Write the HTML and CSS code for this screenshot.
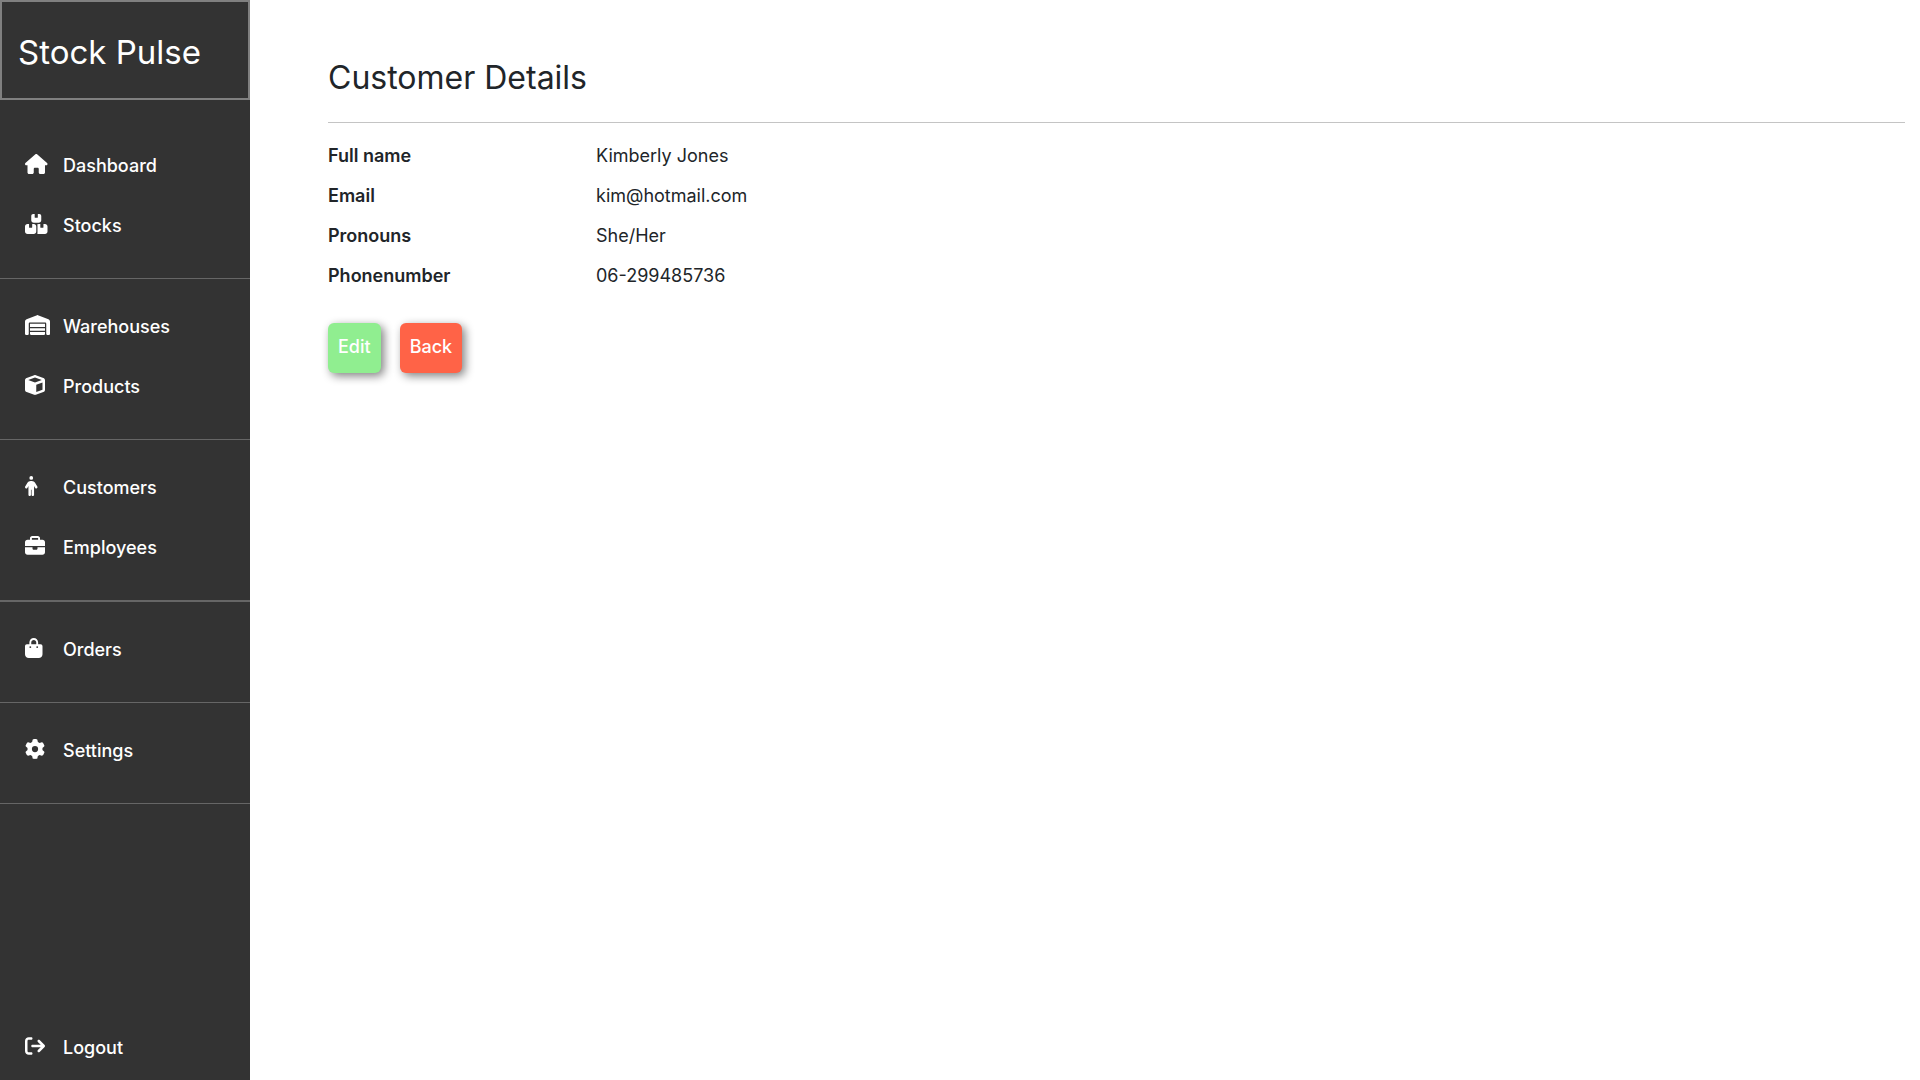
FILE: index.html
```html
<!DOCTYPE html>
<html lang="en">
<head>
<meta charset="utf-8">
<meta name="viewport" content="width=device-width, initial-scale=1">
<title>Stock Pulse - Customer Details</title>
<link rel="stylesheet" href="styles.css">
</head>
<body>
<div class="layout">
  <aside class="sidebar">
    <a class="brand" href="#">Stock Pulse</a>
    <nav class="menu">
      <ul class="menu-group">
        <li><a class="menu-link" href="#"><svg class="icon" viewBox="0 0 576 512" aria-hidden="true"><path d="M575.8 255.5c0 18-15 32.1-32 32.1h-32l.7 160.2c0 2.7-.2 5.4-.5 8.1V472c0 22.1-17.9 40-40 40H456c-1.1 0-2.2 0-3.3-.1c-1.4 .1-2.8 .1-4.2 .1H416 392c-22.1 0-40-17.9-40-40V448 384c0-17.7-14.3-32-32-32H256c-17.7 0-32 14.3-32 32v64 24c0 22.1-17.9 40-40 40H160 128.1c-1.5 0-3-.1-4.5-.2c-1.2 .1-2.4 .2-3.6 .2H104c-22.1 0-40-17.9-40-40V360c0-.9 0-1.9 .1-2.8V287.6H32c-18 0-32-14-32-32.1c0-9 3-17 10-24L266.4 8c7-7 15-8 22-8s15 2 21 7L564.8 231.5c8 7 12 15 11 24z"/></svg><span>Dashboard</span></a></li>
        <li><a class="menu-link" href="#"><svg class="icon" viewBox="0 0 576 512" aria-hidden="true"><path d="M248 0H208c-26.5 0-48 21.5-48 48V160c0 35.3 28.7 64 64 64H352c35.3 0 64-28.7 64-64V48c0-26.5-21.5-48-48-48H328V80c0 8.8-7.2 16-16 16H264c-8.8 0-16-7.2-16-16V0zM64 256c-35.3 0-64 28.7-64 64V448c0 35.3 28.7 64 64 64H224c35.3 0 64-28.7 64-64V320c0-35.3-28.7-64-64-64H184v80c0 8.8-7.2 16-16 16H120c-8.8 0-16-7.2-16-16V256H64zM352 512H512c35.3 0 64-28.7 64-64V320c0-35.3-28.7-64-64-64H472v80c0 8.8-7.2 16-16 16H408c-8.8 0-16-7.2-16-16V256H352c-15 0-28.8 5.1-39.7 13.8c4.9 10.4 7.7 22 7.7 34.2V464c0 12.2-2.8 23.8-7.7 34.2C323.2 506.9 337 512 352 512z"/></svg><span>Stocks</span></a></li>
      </ul>
      <ul class="menu-group">
        <li><a class="menu-link" href="#"><svg class="icon" viewBox="0 0 640 512" aria-hidden="true"><path d="M0 488V171.3c0-26.2 15.9-49.7 40.2-59.4L308.1 4.8c7.6-3.1 16.1-3.1 23.8 0L599.8 111.9c24.3 9.7 40.2 33.3 40.2 59.4V488c0 13.3-10.7 24-24 24H568c-13.3 0-24-10.7-24-24V224c0-17.7-14.3-32-32-32H128c-17.7 0-32 14.3-32 32V488c0 13.3-10.7 24-24 24H24c-13.3 0-24-10.7-24-24zm488 24l-336 0c-13.3 0-24-10.7-24-24V432H512l0 56c0 13.3-10.7 24-24 24zM128 400V336H512v64H128zm0-96V224H512l0 80H128z"/></svg><span>Warehouses</span></a></li>
        <li><a class="menu-link" href="#"><svg class="icon" viewBox="0 0 512 512" aria-hidden="true"><path d="M234.5 5.7c13.9-5 29.1-5 43.1 0l192 68.6C495 83.4 512 107.5 512 134.6V377.4c0 27-17 51.2-42.5 60.3l-192 68.6c-13.9 5-29.1 5-43.1 0l-192-68.6C17 428.6 0 404.5 0 377.4V134.6c0-27 17-51.2 42.5-60.3l192-68.6zM256 66L82.3 128 256 190l173.7-62L256 66zm32 368.6l160-57.1v-188L288 246.6v188z"/></svg><span>Products</span></a></li>
      </ul>
      <ul class="menu-group menu-group-strong">
        <li><a class="menu-link" href="#"><svg class="icon" viewBox="0 0 320 512" aria-hidden="true"><path d="M112 48a48 48 0 1 1 96 0 48 48 0 1 1-96 0zm40 304V480c0 17.7-14.3 32-32 32s-32-14.3-32-32V256.9L59.4 304.5c-9.1 15.1-28.8 20-43.9 10.9s-20-28.8-10.9-43.9l58.3-97c17.4-28.9 48.6-46.6 82.3-46.6h29.7c33.7 0 64.9 17.7 82.3 46.6l58.3 97c9.1 15.1 4.2 34.8-10.9 43.9s-34.8 4.2-43.9-10.9L232 256.9V480c0 17.7-14.3 32-32 32s-32-14.3-32-32V352H152z"/></svg><span>Customers</span></a></li>
        <li><a class="menu-link" href="#"><svg class="icon" viewBox="0 0 512 512" aria-hidden="true"><path d="M184 48H328c4.4 0 8 3.6 8 8V96H176V56c0-4.4 3.6-8 8-8zm-56 8V96H64C28.7 96 0 124.7 0 160v96H192 320 512V160c0-35.3-28.7-64-64-64H384V56c0-30.9-25.1-56-56-56H184c-30.9 0-56 25.1-56 56zM512 288H320v32c0 17.7-14.3 32-32 32H224c-17.7 0-32-14.3-32-32V288H0V416c0 35.3 28.7 64 64 64H448c35.3 0 64-28.7 64-64V288z"/></svg><span>Employees</span></a></li>
      </ul>
      <ul class="menu-group">
        <li><a class="menu-link" href="#"><svg class="icon" viewBox="0 0 448 512" aria-hidden="true"><path d="M160 112c0-35.3 28.7-64 64-64s64 28.7 64 64v48H160V112zm-48 48H48c-26.5 0-48 21.5-48 48V416c0 53 43 96 96 96H352c53 0 96-43 96-96V208c0-26.5-21.5-48-48-48H336V112C336 50.1 285.9 0 224 0S112 50.1 112 112v48zm24 48a24 24 0 1 1 0 48 24 24 0 1 1 0-48zm152 24a24 24 0 1 1 48 0 24 24 0 1 1-48 0z"/></svg><span>Orders</span></a></li>
      </ul>
      <ul class="menu-group">
        <li><a class="menu-link" href="#"><svg class="icon" viewBox="0 0 512 512" aria-hidden="true"><path d="M495.9 166.6c3.2 8.7 .5 18.4-6.4 24.6l-43.3 39.4c1.1 8.3 1.7 16.8 1.7 25.4s-.6 17.1-1.7 25.4l43.3 39.4c6.9 6.2 9.6 15.9 6.4 24.6c-4.4 11.9-9.7 23.3-15.8 34.3l-4.7 8.1c-6.6 11-14 21.4-22.1 31.2c-5.9 7.2-15.7 9.6-24.5 6.8l-55.7-17.7c-13.4 10.3-28.2 18.9-44 25.4l-12.5 57.1c-2 9.1-9 16.3-18.2 17.8c-13.8 2.3-28 3.5-42.5 3.5s-28.7-1.2-42.5-3.5c-9.2-1.5-16.2-8.7-18.2-17.8l-12.5-57.1c-15.8-6.5-30.6-15.1-44-25.4L83.1 425.9c-8.8 2.8-18.6 .3-24.5-6.8c-8.1-9.8-15.5-20.2-22.1-31.2l-4.7-8.1c-6.1-11-11.4-22.4-15.8-34.3c-3.2-8.7-.5-18.4 6.4-24.6l43.3-39.4C64.6 273.1 64 264.6 64 256s.6-17.1 1.7-25.4L22.4 191.2c-6.9-6.2-9.6-15.9-6.4-24.6c4.4-11.9 9.7-23.3 15.8-34.3l4.7-8.1c6.6-11 14-21.4 22.1-31.2c5.9-7.2 15.7-9.6 24.5-6.8l55.7 17.7c13.4-10.3 28.2-18.9 44-25.4l12.5-57.1c2-9.1 9-16.3 18.2-17.8C227.3 1.2 241.5 0 256 0s28.7 1.2 42.5 3.5c9.2 1.5 16.2 8.7 18.2 17.8l12.5 57.1c15.8 6.5 30.6 15.1 44 25.4l55.7-17.7c8.8-2.8 18.6-.3 24.5 6.8c8.1 9.8 15.5 20.2 22.1 31.2l4.7 8.1c6.1 11 11.4 22.4 15.8 34.3zM256 336a80 80 0 1 0 0-160 80 80 0 1 0 0 160z"/></svg><span>Settings</span></a></li>
      </ul>
    </nav>
    <a class="menu-link logout" href="#"><svg class="icon" viewBox="0 0 512 512" aria-hidden="true"><path d="M502.6 278.6c12.5-12.5 12.5-32.8 0-45.3l-128-128c-12.5-12.5-32.8-12.5-45.3 0s-12.5 32.8 0 45.3L402.7 224 192 224c-17.7 0-32 14.3-32 32s14.3 32 32 32l210.7 0-73.4 73.4c-12.5 12.5-12.5 32.8 0 45.3s32.8 12.5 45.3 0l128-128zM160 96c17.7 0 32-14.3 32-32s-14.3-32-32-32L96 32C43 32 0 75 0 128L0 384c0 53 43 96 96 96l64 0c17.7 0 32-14.3 32-32s-14.3-32-32-32l-64 0c-17.7 0-32-14.3-32-32l0-256c0-17.7 14.3-32 32-32l64 0z"/></svg><span>Logout</span></a>
  </aside>
  <main class="content">
    <h1 class="title">Customer Details</h1>
    <dl class="details">
      <dt>Full name</dt><dd>Kimberly Jones</dd>
      <dt>Email</dt><dd>kim@hotmail.com</dd>
      <dt>Pronouns</dt><dd>She/Her</dd>
      <dt>Phonenumber</dt><dd>06-299485736</dd>
    </dl>
    <div class="actions">
      <button class="button button-edit" type="button">Edit</button>
      <button class="button button-back" type="button">Back</button>
    </div>
  </main>
</div>
</body>
</html>
```
FILE: styles.css
```css
* {
  box-sizing: border-box;
}

body {
  margin: 0;
  font-family: Inter, "Open Sans", sans-serif;
  font-size: 18px;
  line-height: 24px;
  color: #212529;
  background: #fff;
}

.layout {
  display: flex;
  min-height: 100vh;
}

.sidebar {
  display: flex;
  flex-direction: column;
  flex: 0 0 250px;
  background: #333;
  color: #fff;
}

.brand {
  padding: 30px 16px 26px;
  border: 2px solid #808080;
  font-size: 33px;
  line-height: 40px;
  color: inherit;
  text-decoration: none;
}

.menu {
  padding-top: 18px;
}

.menu-group {
  margin: 0;
  padding: 18px 0 22px;
  border-bottom: 1px solid #666;
  list-style: none;
}

.menu-group-strong {
  border-bottom-width: 2px;
}

.menu-link {
  display: grid;
  grid-template-columns: 38px 1fr;
  align-items: center;
  height: 60px;
  padding-left: 25px;
  font-weight: 500;
  color: inherit;
  text-decoration: none;
}

.icon {
  height: 20px;
  margin-bottom: 4px;
  fill: currentColor;
}

.logout {
  margin-top: auto;
  margin-bottom: 2px;
}

.content {
  flex: 1;
  padding: 58px 15px 40px 78px;
}

.title {
  margin: 0 0 13px;
  padding-bottom: 24px;
  border-bottom: 1px solid #c4c4c4;
  font-size: 32px;
  font-weight: 400;
  line-height: 40px;
}

.details {
  display: grid;
  grid-template-columns: 268px 1fr;
  margin: 0 0 27px;
  line-height: 40px;
}

.details dt {
  font-weight: 600;
}

.details dd {
  margin: 0;
}

.actions {
  display: flex;
  gap: 19px;
}

.button {
  height: 50px;
  padding: 0 10px 3px;
  border: 0;
  border-radius: 6px;
  font: inherit;
  font-weight: 500;
  color: #fff;
  box-shadow: 3px 3px 10px #808080;
}

.button-edit {
  background: #90ee90;
}

.button-back {
  background: #ff6347;
}
```
